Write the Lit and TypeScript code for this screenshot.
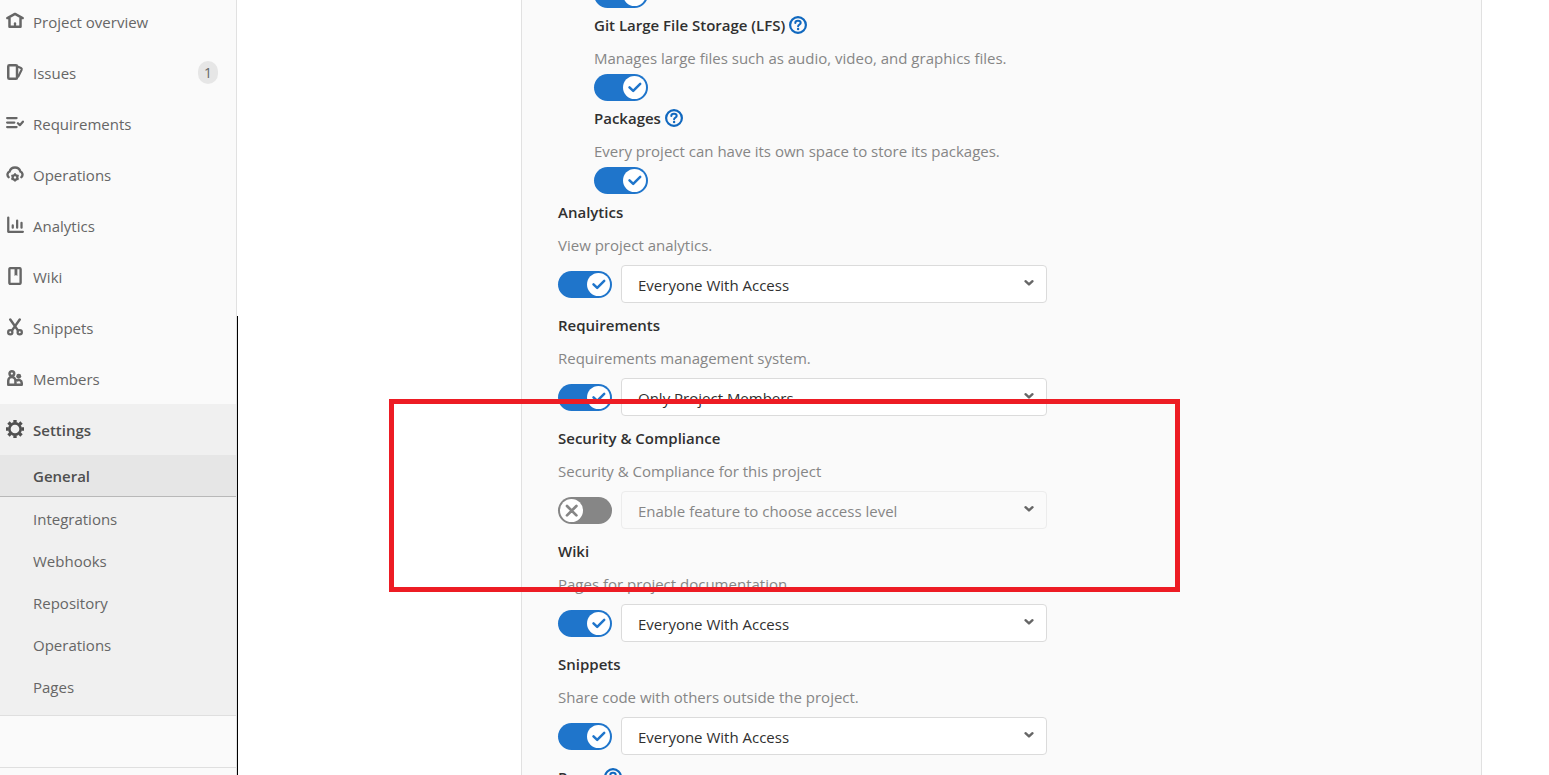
import { LitElement, html, css, svg, nothing } from "lit";
import { customElement, property } from "lit/decorators.js";

type Glyph = ReturnType<typeof svg>;

const icons: Record<string, Glyph> = {
  home: svg`<path fill="none" stroke="currentColor" stroke-width="2.2" stroke-linecap="round" stroke-linejoin="round" d="M1.200 5.400 8 1.700l6.800 3.700M3.100 5.400v7.800h9.800V5.400"/><path fill="currentColor" d="M7 13v-3a1 1 0 0 1 2 0v3z"/>`,
  issues: svg`<rect x="2" y="2" width="7.800" height="12" rx="1" fill="none" stroke="currentColor" stroke-width="2.200"/><path fill="none" stroke="currentColor" stroke-width="1.900" stroke-linejoin="round" d="M10.200 3.200l3.100 1.300q1 .5.600 1.500L10.600 12.600"/>`,
  requirements: svg`<path fill="none" stroke="currentColor" stroke-width="2" stroke-linecap="round" stroke-linejoin="round" d="M1 3.600h8.400M1 7.600h6.400M1 11.600h8.400M10.600 8.200l1.700 1.700L15 6.800"/>`,
  operations: svg`<path fill="none" stroke="currentColor" stroke-width="2.100" stroke-linecap="round" d="M2.300 10.800A3 3 0 0 1 3.200 5.800 5 5 0 0 1 12.800 5.800a3 3 0 0 1 .9 5"/><circle cx="8" cy="11" r="2.100" fill="none" stroke="currentColor" stroke-width="2"/><path stroke="currentColor" stroke-width="1.700" d="M8 7.300v1.500M8 13.200v1.500M4.800 9.150l1.300.75M9.900 12.100l1.300.75M4.800 12.850l1.300-.75M9.900 9.900l1.300-.75"/>`,
  analytics: svg`<path fill="none" stroke="currentColor" stroke-width="2" stroke-linecap="round" stroke-linejoin="round" d="M2 1.400V14h13M6 8.400v2M9.900 4v6.400M13.800 6v4.400"/>`,
  wiki: svg`<rect x="3" y="1" width="10" height="14" rx="1" fill="none" stroke="currentColor" stroke-width="2.100"/><path fill="currentColor" d="M7.600 1h2.500v7L8.850 7 7.600 8z"/>`,
  snippets: svg`<path fill="none" stroke="currentColor" stroke-width="2.200" stroke-linecap="round" d="M3.800 1.400 10.600 11M12.200 1.400 5.400 11"/><circle cx="3.800" cy="12.700" r="1.900" fill="none" stroke="currentColor" stroke-width="2"/><circle cx="12.200" cy="12.700" r="1.900" fill="none" stroke="currentColor" stroke-width="2"/>`,
  members: svg`<circle cx="5.200" cy="4" r="2.100" fill="none" stroke="currentColor" stroke-width="2.200"/><path fill="none" stroke="currentColor" stroke-width="2.200" stroke-linejoin="round" d="M2 14V10.400a3.200 3.200 0 0 1 6.400 0V14zM8.400 14H14v-1.600a2.700 2.700 0 0 0-4.700-1.800"/><circle cx="11.300" cy="6.400" r="2.200" fill="currentColor"/>`,
  settings: svg`<circle cx="8" cy="8" r="5" fill="none" stroke="currentColor" stroke-width="2.300"/><path stroke="currentColor" stroke-width="3" d="M8 0v2.400M8 13.600V16M0 8h2.400M13.600 8H16M2.200 2.200l1.700 1.700M12.100 12.100l1.700 1.700M2.200 13.800l1.700-1.700M12.100 3.900l1.700-1.700"/>`,
};

interface NavItem { label: string; icon: string; badge?: number; }
interface Feature { id: string; title: string; text?: string; access?: string; off?: boolean; help?: boolean; }

const navItems: NavItem[] = [
  { label: "Project overview", icon: "home" },
  { label: "Issues", icon: "issues", badge: 1 },
  { label: "Requirements", icon: "requirements" },
  { label: "Operations", icon: "operations" },
  { label: "Analytics", icon: "analytics" },
  { label: "Wiki", icon: "wiki" },
  { label: "Snippets", icon: "snippets" },
  { label: "Members", icon: "members" },
];

const settingsItems = ["General", "Integrations", "Webhooks", "Repository", "Operations", "Pages"];

const repositoryFeatures: Feature[] = [
  { id: "lfs", title: "Git Large File Storage (LFS)", text: "Manages large files such as audio, video, and graphics files.", help: true },
  { id: "packages", title: "Packages", text: "Every project can have its own space to store its packages.", help: true },
];

const features: Feature[] = [
  { id: "analytics", title: "Analytics", text: "View project analytics.", access: "Everyone With Access" },
  { id: "requirements", title: "Requirements", text: "Requirements management system.", access: "Only Project Members" },
  { id: "security", title: "Security & Compliance", text: "Security & Compliance for this project", access: "Enable feature to choose access level", off: true },
  { id: "wiki", title: "Wiki", text: "Pages for project documentation.", access: "Everyone With Access" },
  { id: "snippets", title: "Snippets", text: "Share code with others outside the project.", access: "Everyone With Access" },
];

@customElement("project-sidebar")
export class ProjectSidebar extends LitElement {
  static styles = css`
    :host { display: block; box-sizing: border-box; background: #fafafa; border-right: 1px solid #e1e1e1; overflow: hidden; }
    .menu { margin: -4px 0 0; padding: 0; list-style: none; }
    .link { display: flex; align-items: center; gap: 9px; height: 51px; padding: 0 18px 1px 6px; box-sizing: border-box; color: #666; text-decoration: none; }
    .label { flex: 1; padding-top: 1px; }
    .icon { width: 18px; height: 18px; flex: none; }
    .badge { min-width: 20px; height: 23px; line-height: 24px; border-radius: 10px; background: #e6e6e6; text-align: center; font-size: 14px; color: #666; }
    .section { background: #f0f0f0; border-bottom: 1px solid #dfdfdf; padding-bottom: 8px; }
    .active { color: #4f4f4f; font-weight: 600; }
    .submenu { margin: 0; padding: 0; list-style: none; }
    .sublink { display: flex; align-items: center; height: 42px; padding: 1px 18px 0 33px; box-sizing: border-box; color: #666; text-decoration: none; }
    .sublink.current { background: #e6e6e6; border-bottom: 1px solid #b8b8b8; color: #4f4f4f; font-weight: 600; }
    .collapse { margin-top: 51px; border-top: 1px solid #dfdfdf; height: 51px; }
  `;

  private link(item: NavItem, active = false) {
    return html`<a class="link ${active ? "active" : ""}" href="#">
      <svg class="icon" viewBox="0 0 16 16" aria-hidden="true">${icons[item.icon]}</svg>
      <span class="label">${item.label}</span>
      ${item.badge ? html`<span class="badge">${item.badge}</span>` : nothing}
    </a>`;
  }

  render() {
    return html`<nav>
      <ul class="menu">
        ${navItems.map((item) => html`<li>${this.link(item)}</li>`)}
        <li class="section">
          ${this.link({ label: "Settings", icon: "settings" }, true)}
          <ul class="submenu">
            ${settingsItems.map((name, i) => html`<li><a class="sublink ${i === 0 ? "current" : ""}" href="#">${name}</a></li>`)}
          </ul>
        </li>
      </ul>
      <div class="collapse"></div>
    </nav>`;
  }
}

@customElement("feature-toggle")
export class FeatureToggle extends LitElement {
  @property({ type: Boolean }) off = false;
  @property() name = "";

  static styles = css`
    :host { display: block; flex: none; }
    .toggle { display: block; position: relative; width: 54px; height: 27px; }
    .input { appearance: none; display: block; width: 54px; height: 27px; margin: 0; border-radius: 14px; background: #868686; cursor: pointer; }
    .input:checked { background: #1f75cb; }
    .knob { position: absolute; top: 2px; left: 2px; width: 23px; height: 23px; pointer-events: none; color: #868686; }
    .input:checked + .knob { left: auto; right: 2px; color: #1f75cb; }
  `;

  render() {
    return html`<span class="toggle">
      <input class="input" type="checkbox" role="switch" aria-label=${this.name} .checked=${!this.off} />
      <svg class="knob" viewBox="0 0 23 23" aria-hidden="true">
        <circle cx="11.500" cy="11.500" r="11.500" fill="#fff"/>
        ${this.off
          ? svg`<path d="M7 7l9.400 9.400M16.400 7 7 16.400" fill="none" stroke="currentColor" stroke-width="2.700" stroke-linecap="round"/>`
          : svg`<path d="M6.500 11.300l3.700 3.600 7-7" fill="none" stroke="currentColor" stroke-width="2.500" stroke-linecap="round" stroke-linejoin="round"/>`}
      </svg>
    </span>`;
  }
}

@customElement("feature-settings")
export class FeatureSettings extends LitElement {
  static styles = css`
    :host { display: block; box-sizing: border-box; background: #fafafa; border: solid #e1e1e1; border-width: 0 1px; padding: 0 36px; overflow: hidden; }
    .list { margin-top: -19px; }
    .nested { padding-left: 36px; }
    .feature { padding-top: 5px; }
    .feature.wide { padding-top: 10px; }
    .nested + .feature.wide { padding-top: 6px; }
    .title { display: flex; align-items: center; gap: 4px; height: 24px; line-height: 24px; font-weight: 600; color: #303030; }
    .help { display: block; width: 18px; height: 18px; color: #1068bf; }
    .help svg { display: block; width: 18px; height: 18px; }
    .text { margin: 9px 0 4px; line-height: 24px; color: #868686; }
    .wide .text { margin-bottom: 8px; }
    .controls { display: flex; align-items: center; gap: 9px; }
    .picker { position: relative; flex: 1; max-width: 426px; }
    .select { appearance: none; display: block; width: 100%; height: 38px; box-sizing: border-box; padding: 2px 36px 0 16px; border: 1px solid #dbdbdb; border-radius: 4px; background: #fff; color: #303030; font: inherit; }
    .select:disabled { background: #fafafa; border-color: #ececec; color: #868686; opacity: 1; }
    .chevron { position: absolute; right: 12px; top: 12px; width: 12px; height: 12px; color: #666; pointer-events: none; }
  `;

  private help() {
    return html`<a class="help" href="#" aria-label="Help"><svg viewBox="0 0 18 18"><circle cx="9" cy="9" r="7.900" fill="none" stroke="currentColor" stroke-width="2.200"/><path d="M6.300 7C6.300 5.600 7.400 4.800 9 4.800s2.700.8 2.700 2.100c0 1.700-2.600 1.700-2.600 3.300" fill="none" stroke="currentColor" stroke-width="2" stroke-linecap="round"/><circle cx="9.100" cy="13" r="1.200" fill="currentColor"/></svg></a>`;
  }

  private feature(f: Feature) {
    return html`<section class="feature ${f.access ? "wide" : ""}">
      <div class="title">
        <label for=${f.access ? f.id : nothing}>${f.title}</label>
        ${f.help ? this.help() : nothing}
      </div>
      <p class="text">${f.text}</p>
      <div class="controls">
        <feature-toggle .name=${f.title} .off=${!!f.off}></feature-toggle>
        ${f.access
          ? html`<div class="picker">
              <select class="select" id=${f.id} ?disabled=${!!f.off}><option>${f.access}</option></select>
              <svg class="chevron" viewBox="0 0 12 12" aria-hidden="true"><path d="M2.500 4.200 6 7.400l3.500-3.200" fill="none" stroke="currentColor" stroke-width="2.400" stroke-linecap="round" stroke-linejoin="round"/></svg>
            </div>`
          : nothing}
      </div>
    </section>`;
  }

  render() {
    return html`<div class="list">
      <div class="nested">
        <feature-toggle .name=${"Container registry"}></feature-toggle>
        ${repositoryFeatures.map((f) => this.feature(f))}
      </div>
      ${features.map((f) => this.feature(f))}
      <section class="feature wide">
        <div class="title">
          <span>Pages</span>
          ${this.help()}
        </div>
      </section>
    </div>`;
  }
}

@customElement("app-root")
export class AppRoot extends LitElement {
  static styles = css`
    :host { display: grid; grid-template-columns: 237px 284px minmax(0, 1fr) 67px; position: relative; height: 100vh; overflow: hidden; background: #fff; font-family: "Open Sans", "Noto Sans", sans-serif; font-size: 15px; line-height: 24px; }
    .panel { grid-column: 3; min-height: 0; }
    .side { min-height: 0; }
    .rule { position: absolute; left: 237px; top: 316px; bottom: 0; width: 1px; background: #000; }
    .highlight { position: absolute; left: 389px; top: 399px; width: 791px; height: 193px; box-sizing: border-box; border: 5px solid #ed1c24; pointer-events: none; }
  `;

  render() {
    return html`
      <project-sidebar class="side"></project-sidebar>
      <feature-settings class="panel"></feature-settings>
      <div class="rule"></div>
      <div class="highlight"></div>
    `;
  }
}
